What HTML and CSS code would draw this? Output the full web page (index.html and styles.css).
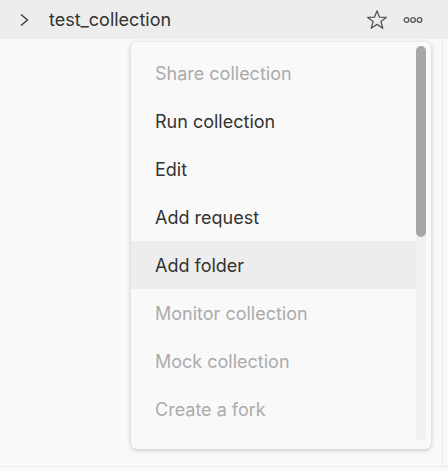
FILE: index.html
```html
<!DOCTYPE html>
<html>
<head>
<meta charset="utf-8">
<link rel="stylesheet" href="styles.css">
</head>
<body>
<div class="panel">
  <div class="row-head">
    <svg class="chev" width="12" height="16" viewBox="0 0 12 16"><path d="M3 2.5 L9.5 8 L3 13.5" fill="none" stroke="#333" stroke-width="1.3"/></svg>
    <span class="name">test_collection</span>
    <span class="spacer"></span>
    <svg class="star" width="22" height="22" viewBox="0 0 22 22"><path d="M11 1.8 L13.5 8.2 L20.3 8.4 L14.9 12.6 L16.8 19.3 L11 15.4 L5.2 19.3 L7.1 12.6 L1.7 8.4 L8.5 8.2 Z" fill="none" stroke="#555" stroke-width="1.3" stroke-linejoin="round"/></svg>
    <svg class="dots" width="20" height="8" viewBox="0 0 20 8"><circle cx="3.5" cy="4" r="2.3" fill="none" stroke="#555" stroke-width="1.3"/><circle cx="10" cy="4" r="2.3" fill="none" stroke="#555" stroke-width="1.3"/><circle cx="16.5" cy="4" r="2.3" fill="none" stroke="#555" stroke-width="1.3"/></svg>
  </div>
  <div class="content">
    <div class="menu">
      <div class="list">
        <div class="item disabled">Share collection</div>
        <div class="item">Run collection</div>
        <div class="item">Edit</div>
        <div class="item">Add request</div>
        <div class="item hover">Add folder</div>
        <div class="item disabled">Monitor collection</div>
        <div class="item disabled">Mock collection</div>
        <div class="item disabled">Create a fork</div>
      </div>
      <div class="track"><div class="thumb"></div></div>
    </div>
  </div>
</div>
</body>
</html>
```
FILE: styles.css
```css
* { box-sizing: border-box; }
html, body { margin: 0; padding: 0; }
body {
  width: 448px;
  height: 471px;
  background: #f9f9f9;
  font-family: Inter, "Noto Sans", sans-serif;
  overflow: hidden;
}
.panel {
  width: 448px;
  height: 467px;
  border-bottom: 1px solid #ececec;
  display: flex;
  flex-direction: column;
}
.row-head {
  height: 39px;
  background: #ededed;
  display: flex;
  align-items: center;
  padding-left: 18px;
  padding-right: 25px;
}
.chev { margin-right: 19px; }
.name { font-size: 18px; color: #333333; }
.spacer { flex: 1; }
.star { margin-right: 15px; }
.content {
  flex: 1;
  display: flex;
  justify-content: flex-end;
  padding: 3px 11px 0 0;
  border-right: 1px solid #ececec;
  margin-right: 5px;
}
.menu {
  width: 300px;
  height: 407px;
  background: #f9f9f9;
  border-radius: 6px;
  box-shadow: 0 1px 5px rgba(0,0,0,0.22);
  display: flex;
  padding: 4px 5px 8px 0;
}
.list { flex: 1; margin-top: 3px; }
.item {
  height: 48px;
  display: flex;
  align-items: center;
  padding-left: 24px;
  font-size: 18px;
  color: #333333;
}
.item.disabled { color: #ababab; }
.item.hover { background: #ededed; }
.track {
  width: 10px;
  background: #f1f1f1;
  border-radius: 5px;
}
.thumb {
  height: 191px;
  background: #a6a6a6;
  border-radius: 5px;
}
```
